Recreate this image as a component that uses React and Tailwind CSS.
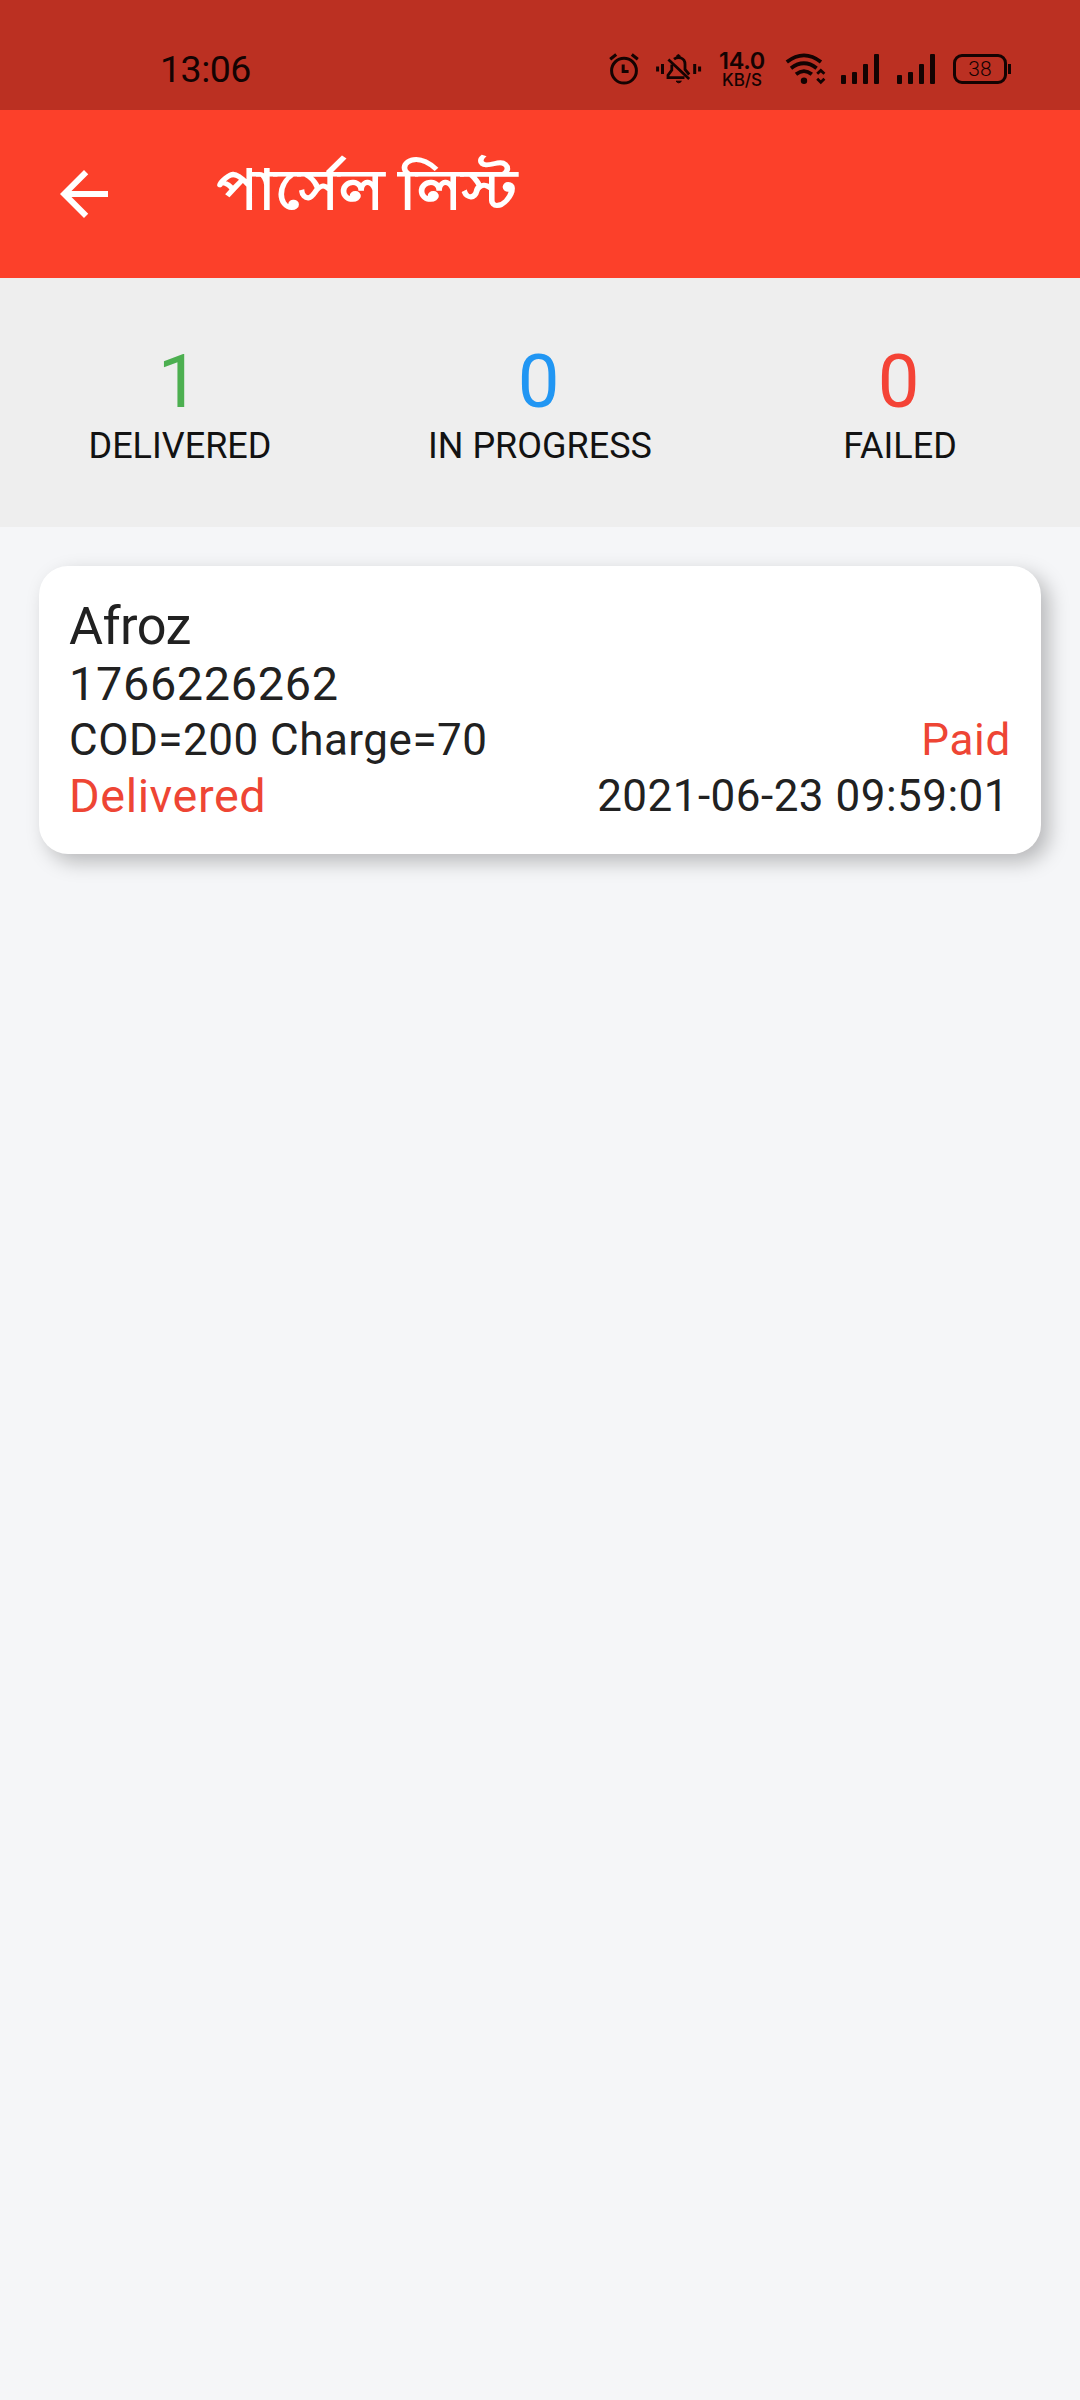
function AlarmIcon() {
  return (
    <svg className="h-[34px] w-[32px]" viewBox="0 0 32 34" fill="none" stroke="currentColor">
      <circle cx="16" cy="18.7" r="12.4" strokeWidth="3" />
      <path d="M15.2 12.6V19.6H20.6" strokeWidth="3" />
      <path d="M2.2 7.2L8.2 2.6M29.8 7.2L23.8 2.6" strokeWidth="3.2" />
    </svg>
  );
}

function MutedBellIcon() {
  return (
    <svg className="h-[32px] w-[46px]" viewBox="0 0 46 32" fill="none" stroke="currentColor">
      <path d="M1.6 13.5v5M6.5 11v10M38.7 11v10M43.6 13.5v5" strokeWidth="3" />
      <path d="M15.8 11.5V17L12 22.3V24.7H28.5" strokeWidth="2.8" />
      <path d="M18 6.2C22 3 29 4.6 29 11.2V16.5L33.2 21.5" strokeWidth="2.8" />
      <path d="M12.4 6.6L33.2 26" strokeWidth="2.8" />
      <path d="M20.4 3.4Q22.4 -0.4 24.4 3.4ZM20 28.2H25.4Q22.7 31.4 20 28.2Z" fill="currentColor" strokeWidth="1" />
    </svg>
  );
}

function WifiIcon() {
  return (
    <svg className="h-[32px] w-[41px]" viewBox="0 0 41 32" fill="none" stroke="currentColor" strokeWidth="3.8">
      <path d="M1.8 9Q19 -4.2 36 9" />
      <path d="M6 15.2Q19 5.4 31.6 15.2" />
      <path d="M11 21.2Q19 15 26.8 21.2" />
      <circle cx="19" cy="27.8" r="3.2" fill="currentColor" stroke="none" />
      <path d="M32.2 20.8L35.8 17.4L39.4 20.8M32.2 25.8L35.8 29.2L39.4 25.8" strokeWidth="2.8" />
    </svg>
  );
}

function SignalIcon() {
  return (
    <svg className="h-[30px] w-[39px]" viewBox="0 0 39 30" fill="currentColor">
      <rect x="0" y="21" width="5" height="9" rx="1" />
      <rect x="11" y="18" width="5" height="12" rx="1" />
      <rect x="22" y="10" width="5" height="20" rx="1" />
      <rect x="33" y="0" width="5" height="30" rx="1" />
    </svg>
  );
}

function StatusBar() {
  return (
    <div className="flex h-[110px] items-start bg-[#bb3022] text-[#140302]">
      <div className="ml-[160px] mt-[47px] w-[448px] text-[37.5px] leading-[44px] tracking-[-0.5px]">13:06</div>
      <div className="mt-[52px]"><AlarmIcon /></div>
      <div className="ml-[16px] mt-[53px]"><MutedBellIcon /></div>
      <div className="ml-[17px] mt-[51px] flex w-[46px] flex-col items-center font-['Inter',sans-serif] font-semibold">
        <span className="text-[23.5px] leading-[19px] tracking-[-0.3px]">14.0</span>
        <span className="mt-[2px] text-[17px] font-medium leading-[16px]">KB/S</span>
      </div>
      <div className="ml-[20px] mt-[53px]"><WifiIcon /></div>
      <div className="ml-[15px] mt-[54px]"><SignalIcon /></div>
      <div className="ml-[17px] mt-[54px]"><SignalIcon /></div>
      <div className="ml-[17px] mt-[54px] flex items-center">
        <div className="flex h-[30px] w-[54px] items-center justify-center rounded-[9px] border-[3px] border-current text-[21px] font-light leading-none">38</div>
        <div className="ml-px h-[10px] w-[3px] bg-current" />
      </div>
    </div>
  );
}

function AppBar() {
  return (
    <header className="flex h-[168px] items-center bg-[#fc402a] text-white">
      <svg className="ml-[48px] size-[72px]" viewBox="0 0 24 24" fill="currentColor">
        <path d="M20 11H7.83l5.59-5.59L12 4l-8 8 8 8 1.41-1.41L7.83 13H20v-2z" />
      </svg>
      <h1 className="mb-[12px] ml-[97px] origin-left scale-x-[1.095] whitespace-nowrap font-['Noto_Sans',sans-serif] text-[55.2px] leading-[72px] [-webkit-text-stroke:2.2px_white]">
        পার্সেল লিস্ট
      </h1>
    </header>
  );
}

function Stat({ value, label, color }) {
  return (
    <div className="flex flex-1 flex-col items-center">
      <span className={`mr-[3px] text-[74.25px] leading-[87px] ${color}`}>{value}</span>
      <span className="text-[36px] leading-[42px] text-[#121212]">{label}</span>
    </div>
  );
}

function ParcelCard() {
  return (
    <article className="mx-[39px] mt-[39px] h-[288px] rounded-[29px] bg-white p-[30px] text-[#212121] shadow-[8px_8px_20px_rgba(0,0,0,0.25)]">
      <div className="text-[52.25px] leading-[61px] tracking-[-0.6px]">Afroz</div>
      <div className="text-[46.75px] leading-[55px] tracking-[0.69px]">1766226262</div>
      <div className="flex h-[56px] items-center justify-between text-[44px] leading-[52px]">
        <span className="tracking-[0.5px]">COD=200 Charge=70</span>
        <span className="tracking-[0.69px] text-[#ee4534]">Paid</span>
      </div>
      <div className="mt-px flex h-[55px] items-start justify-between">
        <span className="text-[46.75px] leading-[55px] tracking-[0.6px] text-[#ee4534]">Delivered</span>
        <span className="mr-[2px] text-[44px] leading-[54px] tracking-[0.48px]">2021-06-23 09:59:01</span>
      </div>
    </article>
  );
}

export default function App() {
  return (
    <main className="h-[2400px] w-[1080px] overflow-hidden bg-[#f5f6f8] font-['Roboto',sans-serif]">
      <StatusBar />
      <AppBar />
      <section className="flex h-[249px] bg-[#eeeeee] pt-[60px]">
        <Stat value="1" label="DELIVERED" color="text-[#4caf50]" />
        <Stat value="0" label="IN PROGRESS" color="text-[#2196f3]" />
        <Stat value="0" label="FAILED" color="text-[#f44336]" />
      </section>
      <ParcelCard />
    </main>
  );
}
